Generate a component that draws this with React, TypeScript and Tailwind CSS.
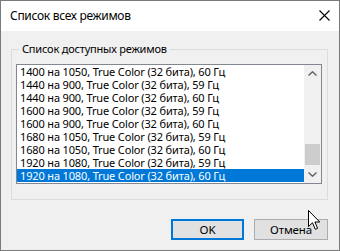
import React from "react";

const items = [
  "1400 на 1050, True Color (32 бита), 60 Гц",
  "1440 на 900, True Color (32 бита), 59 Гц",
  "1440 на 900, True Color (32 бита), 60 Гц",
  "1600 на 900, True Color (32 бита), 59 Гц",
  "1600 на 900, True Color (32 бита), 60 Гц",
  "1680 на 1050, True Color (32 бита), 59 Гц",
  "1680 на 1050, True Color (32 бита), 60 Гц",
  "1920 на 1080, True Color (32 бита), 59 Гц",
  "1920 на 1080, True Color (32 бита), 60 Гц",
];

export default function App() {
  return (
    <div
      className="relative w-[340px] h-[251px] border border-[#7a7a7a] bg-[#f0f0f0] flex flex-col text-[11px] tracking-[-0.15px] text-black overflow-hidden"
      style={{ fontFamily: '"Noto Sans", "Open Sans", sans-serif' }}
    >
      <div className="h-[30px] bg-white flex items-center justify-between pl-[9px] pr-[9px] shrink-0">
        <span className="text-[12px] tracking-[-0.3px] leading-[16px] -mt-[1px]">Список всех режимов</span>
        <svg width="11" height="11" viewBox="0 0 11 11" className="-mt-[1px]">
          <path d="M0.5 0.5 L10.5 10.5 M10.5 0.5 L0.5 10.5" stroke="#000" strokeWidth="1.1" fill="none" />
        </svg>
      </div>

      <fieldset className="mt-[10px] ml-[10px] mr-[11px] border border-[#dcdcdc] pl-[4px] pr-[5px] pt-[7px] pb-[15px]">
        <legend className="ml-[3px] px-[3px] leading-[16px] text-[11px] tracking-[-0.2px]">Список доступных режимов</legend>
        <div className="h-[120px] border border-[#828790] bg-white flex">
          <div className="flex-1 flex flex-col overflow-hidden">
            {items.map((t, i) => (
              <div
                key={i}
                className={
                  "h-[13px] leading-[13px] pl-[3px] whitespace-nowrap shrink-0 " +
                  (i === items.length - 1 ? "bg-[#0078d7] text-white" : "")
                }
              >
                {t}
              </div>
            ))}
          </div>
          <div className="w-[17px] bg-[#f0f0f0] flex flex-col shrink-0">
            <div className="h-[17px] flex items-center justify-center">
              <svg width="9" height="5" viewBox="0 0 9 5">
                <path d="M0.5 4.5 L4.5 0.8 L8.5 4.5" stroke="#606060" strokeWidth="1.4" fill="none" />
              </svg>
            </div>
            <div className="flex-1 px-[1px]">
              <div className="mt-[62px] h-[21px] bg-[#cdcdcd]" />
            </div>
            <div className="h-[17px] flex items-center justify-center">
              <svg width="9" height="5" viewBox="0 0 9 5">
                <path d="M0.5 0.5 L4.5 4.2 L8.5 0.5" stroke="#606060" strokeWidth="1.4" fill="none" />
              </svg>
            </div>
          </div>
        </div>
      </fieldset>

      <div className="mt-[19px] flex justify-end gap-[10px] pr-[11px]">
        <button className="w-[73px] h-[21px] bg-[#e1e1e1] border-2 border-[#0078d7] flex items-center justify-center leading-[16px] text-[11.5px]">
          OK
        </button>
        <button className="w-[74px] h-[21px] bg-[#e1e1e1] border border-[#adadad] flex items-center justify-center leading-[16px] text-[11.5px]">
          Отмена
        </button>
      </div>

      <svg
        className="absolute left-[307px] top-[209px]"
        width="13"
        height="21"
        viewBox="0 0 13 21"
      >
        <path
          d="M0.5 0.5 L0.5 16.5 L4.5 12.8 L7.3 19.3 L9.6 18.3 L6.9 12 L11.8 12 Z"
          fill="#fff"
          stroke="#000"
          strokeWidth="1"
          strokeLinejoin="miter"
        />
      </svg>
    </div>
  );
}
